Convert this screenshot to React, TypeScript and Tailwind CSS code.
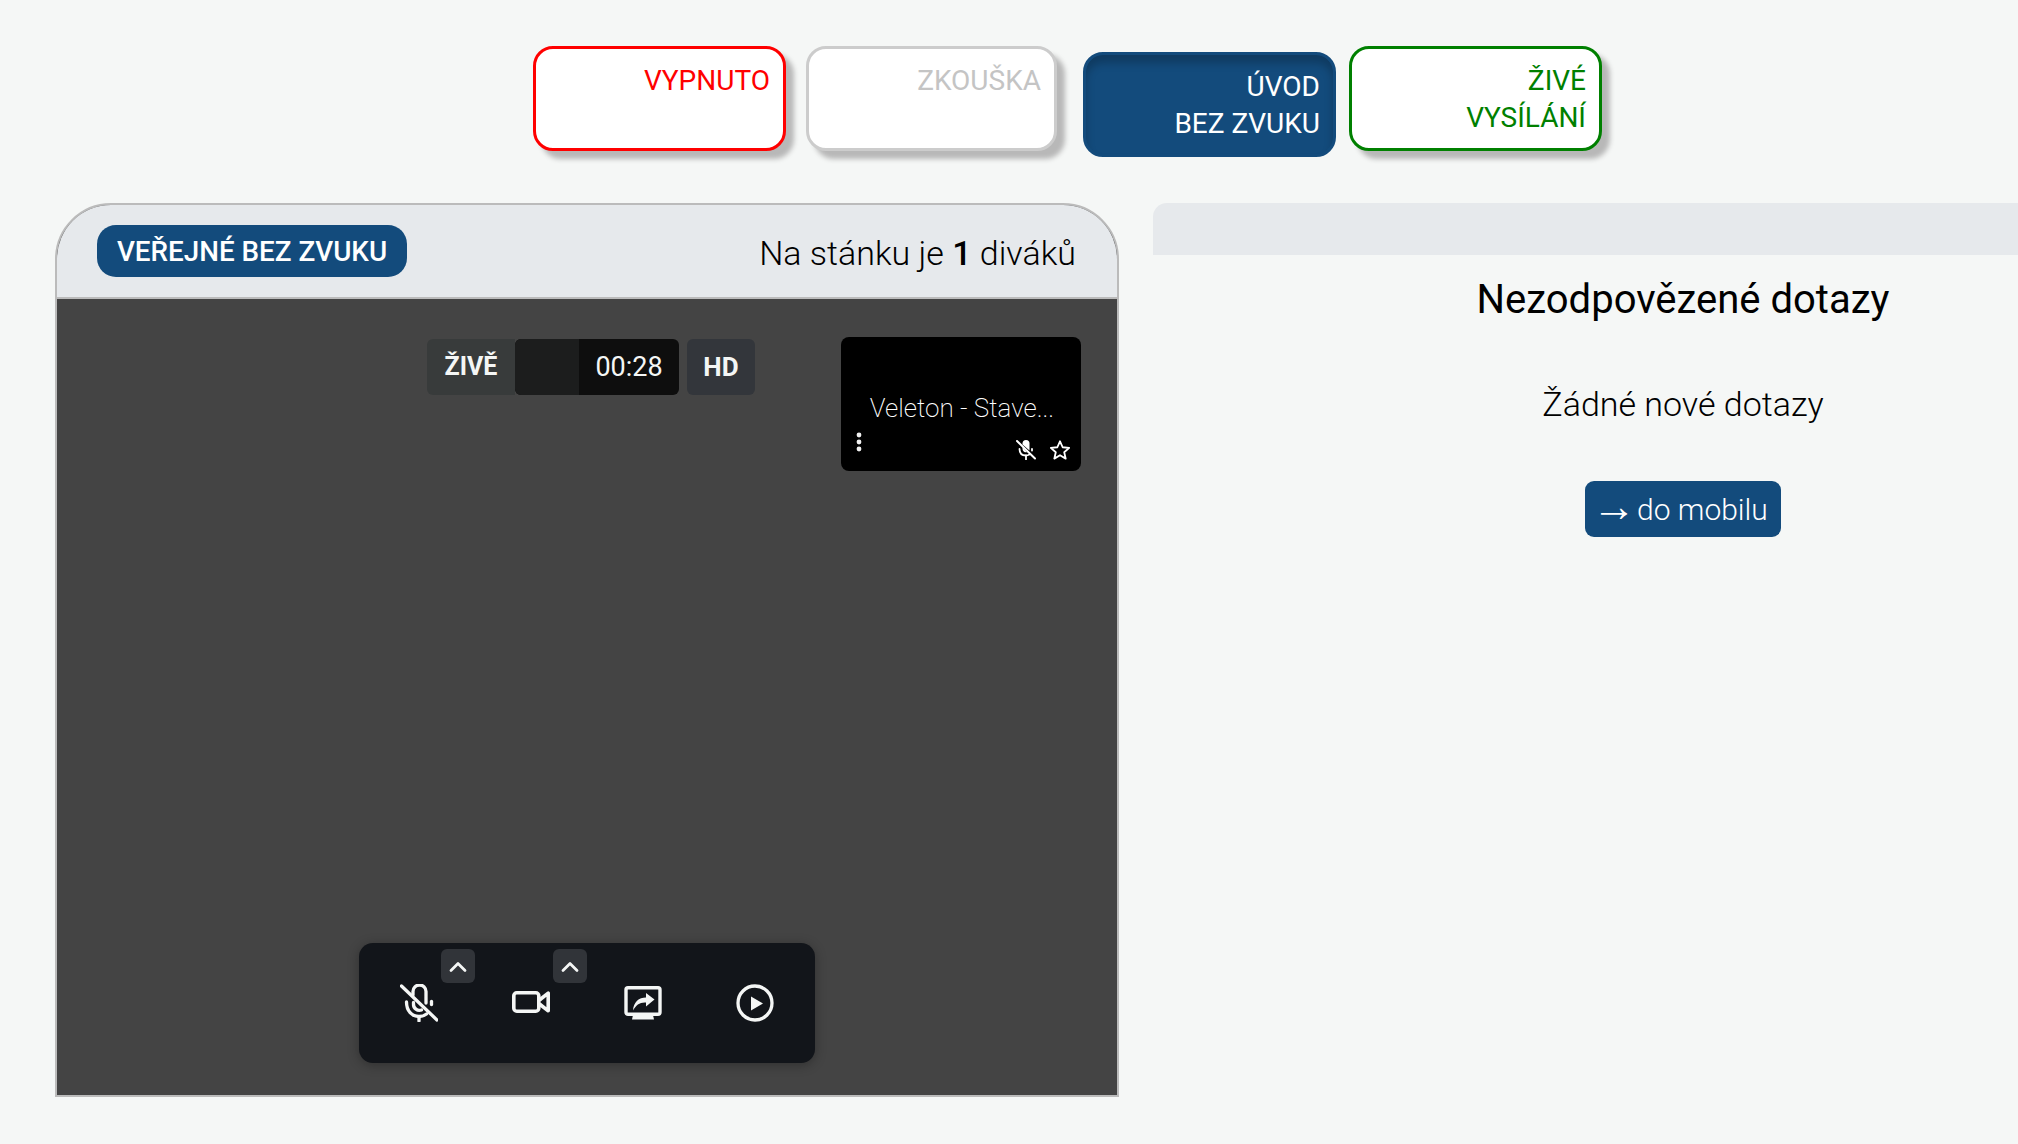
import React from "react";

const roboto = "font-['Roboto',sans-serif]";

function StateButton({ lines, cls, extra = "" }: { lines: string[]; cls: string; extra?: string }) {
  return (
    <div className={`h-[105px] rounded-[20px] flex flex-col items-end pr-[13px] pt-[13px] text-[28px] leading-[37px] font-normal ${cls} ${extra}`}>
      {lines.map((l) => (
        <span key={l}>{l}</span>
      ))}
    </div>
  );
}

function MicOffLarge() {
  return (
    <svg width="38" height="38" viewBox="0 0 38 38" fill="none" stroke="currentColor" strokeWidth="3.3" strokeLinecap="round" strokeLinejoin="round">
      <path d="M1.5 2 L37 36" />
      <path d="M13 11 V7.5 a6.5 6.5 0 0 1 13 0 V19" />
      <path d="M13.5 18.5 V20 a6 6 0 0 0 8 6" />
      <path d="M6.5 18 C6.5 27 12 32.5 19 32.5 C22 32.5 24.5 31.5 26.5 30" />
      <path d="M31.5 17.5 V20.5" />
      <path d="M19 33 V37" />
    </svg>
  );
}

function MicOffSmall() {
  return (
    <svg width="20" height="20" viewBox="0 0 20 20" fill="none" stroke="#fff" strokeWidth="1.8" strokeLinecap="round">
      <path d="M1 1 L19 18.5" stroke="#fff" strokeWidth="2" />
      <path d="M6.5 3.5 a3.5 3.5 0 0 1 7 0 V10.5 L6.5 4.5 Z" fill="#fff" stroke="none" />
      <path d="M6.5 7 V9 a3.5 3.5 0 0 0 4.5 3.2 Z" fill="#fff" stroke="none" />
      <path d="M3.5 9 C3.5 13 6 15.5 10 15.5 C11.5 15.5 12.5 15 13.5 14.5" />
      <path d="M16 9 V10.5" />
      <path d="M10 15.5 V19.5" />
    </svg>
  );
}

function Chevron({ left }: { left: string }) {
  return (
    <div className={`absolute top-[6px] w-[34px] h-[34px] rounded-[6px] bg-[#313439] flex items-center justify-center ${left}`}>
      <svg width="20" height="14" viewBox="0 0 20 14" fill="none" stroke="#f4f6f5" strokeWidth="2.8" strokeLinecap="round" strokeLinejoin="round">
        <path d="M3 11.5 L10 4.5 L17 11.5" />
      </svg>
    </div>
  );
}

export default function App() {
  return (
    <div className={`w-[2018px] h-[1144px] overflow-hidden bg-[#f5f7f6] ${roboto}`}>
      <div className="flex pt-[46px] pl-[533px] items-start">
        <StateButton lines={["VYPNUTO"]} cls="w-[253px] bg-white border-[3px] border-[#ff0000] text-[#ff0000] shadow-[8px_8px_5px_#b8b8b8]" />
        <StateButton lines={["ZKOUŠKA"]} extra="ml-[20px]" cls="w-[251px] bg-white border-[3px] border-[#cccccc] text-[#c4c4c4] shadow-[8px_8px_5px_#b8b8b8]" />
        <StateButton lines={["ÚVOD", "BEZ ZVUKU"]} extra="ml-[26px] mt-[6px]" cls="w-[253px] bg-[#134b7c] border-[3px] border-[#134b7c] text-white shadow-[inset_0_8px_8px_rgba(0,0,0,0.22)]" />
        <StateButton lines={["ŽIVÉ", "VYSÍLÁNÍ"]} extra="ml-[13px]" cls="w-[253px] bg-white border-[3px] border-[#008000] text-[#008000] shadow-[8px_8px_5px_#b8b8b8]" />
      </div>

      <div className="flex mt-[46px] pl-[55px] gap-[34px] items-start">
        <div className="w-[1064px] h-[894px] shrink-0 flex flex-col border-2 border-[#bbbbbb] rounded-t-[56px] overflow-hidden bg-[#444444]">
          <div className="h-[94px] shrink-0 bg-[#e6e9ec] border-b-2 border-[#bbbbbb] flex items-start justify-between pl-[40px] pr-[41px]">
            <div className="mt-[20px] pt-[1px] h-[52px] w-[310px] rounded-[19px] bg-[#134b7c] text-white text-[27.8px] font-medium flex items-center justify-center">VEŘEJNÉ BEZ ZVUKU</div>
            <div className="mt-[26px] text-[34px] leading-[44px] font-light text-black whitespace-pre">Na stánku je <b className="font-medium">1</b> diváků</div>
          </div>
          <div className="relative flex-1">
            <div className="absolute left-[370px] top-[40px] flex h-[56px] text-[#f4f6f5]">
              <div className="w-[88px] rounded-l-[6px] bg-[#383b3b] flex items-center justify-center text-[25px] font-bold">ŽIVĚ</div>
              <div className="w-[164px] rounded-[6px] bg-[#0e0e0e] flex overflow-hidden">
                <div className="w-[64px] bg-[#1c1d1d]" />
                <div className="flex-1 flex items-center justify-center text-[27px] font-normal">00:28</div>
              </div>
              <div className="ml-[8px] w-[68px] rounded-[6px] bg-[#33363b] flex items-center justify-center text-[26px] font-bold">HD</div>
            </div>

            <div className="absolute left-[784px] top-[38px] w-[240px] h-[134px] rounded-[8px] bg-black text-white">
              <div className="absolute left-[2px] right-0 top-[56px] text-center text-[26px] leading-[30px] font-extralight">Veleton - Stave...</div>
              <svg className="absolute left-[14px] top-[95px]" width="8" height="20" viewBox="0 0 8 20" fill="#f0f0f0">
                <circle cx="4" cy="3" r="2.4" />
                <circle cx="4" cy="10" r="2.4" />
                <circle cx="4" cy="17" r="2.4" />
              </svg>
              <span className="absolute left-[175px] top-[103px]"><MicOffSmall /></span>
              <svg className="absolute left-[208px] top-[102px]" width="22" height="22" viewBox="0 0 24 24" fill="none" stroke="#fff" strokeWidth="2" strokeLinejoin="round">
                <path d="M12 2.5 L14.9 9 L22 9.7 L16.6 14.4 L18.2 21.4 L12 17.7 L5.8 21.4 L7.4 14.4 L2 9.7 L9.1 9 Z" />
              </svg>
            </div>

            <div className="absolute left-[302px] top-[644px] w-[456px] h-[120px] rounded-[14px] bg-[#12151a] shadow-[0_2px_12px_rgba(0,0,0,0.3)] text-[#f4f6f5]">
              <div className="flex h-full">
                <div className="w-[112px] ml-[4px] pt-[41px] flex justify-center"><MicOffLarge /></div>
                <div className="w-[112px] pt-[48px] flex justify-center">
                  <svg width="38" height="22" viewBox="0 0 38 22" fill="none" stroke="currentColor" strokeWidth="3.6" strokeLinejoin="round">
                    <rect x="1.8" y="1.8" width="25" height="18.4" rx="3" />
                    <path d="M27.5 9 L36.2 2.2 V19.8 L27.5 13" />
                  </svg>
                </div>
                <div className="w-[112px] pt-[43px] flex justify-center">
                  <svg width="38" height="34" viewBox="0 0 38 34" fill="none">
                    <rect x="2" y="1.7" width="34" height="26.6" rx="2" stroke="currentColor" strokeWidth="3.4" />
                    <path d="M8 33.5 H30 L29 29 H9 Z" fill="currentColor" />
                    <path d="M9 24.5 C9.5 16 15 11.5 22 11.5 V7 L30.5 13.5 L22 20.5 V16.5 C16 16 12 19 9 24.5 Z" fill="currentColor" />
                  </svg>
                </div>
                <div className="w-[112px] pt-[41px] flex justify-center">
                  <svg width="38" height="38" viewBox="0 0 38 38" fill="none">
                    <circle cx="19" cy="19" r="17" stroke="currentColor" strokeWidth="3.3" />
                    <path d="M15 12.5 L27 19.5 L15 26.5 Z" fill="currentColor" />
                  </svg>
                </div>
              </div>
              <Chevron left="left-[82px]" />
              <Chevron left="left-[194px]" />
            </div>
          </div>
        </div>

        <div className="w-[1060px] shrink-0 flex flex-col items-center">
          <div className="w-full h-[52px] rounded-t-[14px] bg-[#e6e9ec]" />
          <h2 className="mt-[20px] text-[40px] leading-[50px] font-normal text-black">Nezodpovězené dotazy</h2>
          <p className="mt-[55px] text-[34px] leading-[48px] font-light text-black">Žádné nové dotazy</p>
          <div className="mt-[53px] h-[56px] w-[196px] pl-[7px] rounded-[9px] bg-[#134b7c] text-white text-[30px] font-light flex items-center whitespace-pre">
            <span className="w-[45px] text-[44px] leading-[56px] -mt-[6px] font-['Liberation_Sans',sans-serif]">→</span>
            <span>do mobilu</span>
          </div>
        </div>
      </div>
    </div>
  );
}
